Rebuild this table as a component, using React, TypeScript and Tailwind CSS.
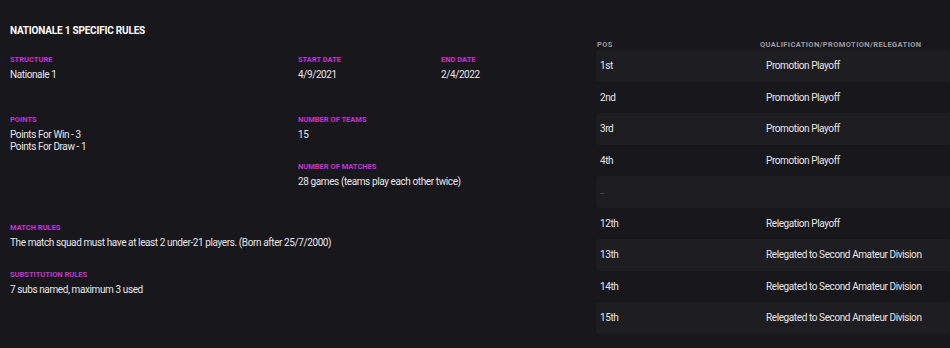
import React from 'react';

const rows = [
  { pos: '1st', rule: 'Promotion Playoff' },
  { pos: '2nd', rule: 'Promotion Playoff' },
  { pos: '3rd', rule: 'Promotion Playoff' },
  { pos: '4th', rule: 'Promotion Playoff' },
  { pos: '...', rule: '' },
  { pos: '12th', rule: 'Relegation Playoff' },
  { pos: '13th', rule: 'Relegated to Second Amateur Division' },
  { pos: '14th', rule: 'Relegated to Second Amateur Division' },
  { pos: '15th', rule: 'Relegated to Second Amateur Division' },
];

const Field: React.FC<{ label: string; lines: string[]; className?: string }> = ({ label, lines, className = '' }) => (
  <div className={className}>
    <div className="text-[7.5px] leading-[8px] font-bold uppercase text-[#c932d2]">{label}</div>
    <div className="mt-[5px] text-[10px] leading-[12px] tracking-[-0.4px] text-[#e6e6ea]">
      {lines.map((l) => (
        <div key={l}>{l}</div>
      ))}
    </div>
  </div>
);

export default function App() {
  return (
    <div className="w-[950px] h-[348px] bg-[#18171b] flex overflow-hidden" style={{ fontFamily: 'Roboto, "Liberation Sans", sans-serif' }}>
      {/* Rules */}
      <div className="w-[596px] pl-[10px] pt-[26px]">
        <h1 className="text-[10px] leading-[10px] font-bold uppercase tracking-[-0.2px] text-white">Nationale 1 Specific Rules</h1>

        <div className="mt-[20px] flex">
          <Field label="Structure" lines={['Nationale 1']} className="w-[288px]" />
          <Field label="Start Date" lines={['4/9/2021']} className="w-[143px]" />
          <Field label="End Date" lines={['2/4/2022']} />
        </div>

        <div className="mt-[35px] flex">
          <Field label="Points" lines={['Points For Win - 3', 'Points For Draw - 1']} className="w-[288px]" />
          <div className="flex flex-col gap-[22px]">
            <Field label="Number of Teams" lines={['15']} />
            <Field label="Number of Matches" lines={['28 games (teams play each other twice)']} />
          </div>
        </div>

        <div className="mt-[36px] flex flex-col gap-[22px]">
          <Field label="Match Rules" lines={['The match squad must have at least 2 under-21 players. (Born after 25/7/2000)']} />
          <Field label="Substitution Rules" lines={['7 subs named, maximum 3 used']} />
        </div>
      </div>

      {/* Positions */}
      <div className="flex-1 pt-[40px]">
        <div className="flex h-[10px] items-center text-[7.5px] font-bold uppercase tracking-[0.4px] text-[#9b9ba1]">
          <div className="w-[164px] pl-[1px]">Pos</div>
          <div>Qualification/Promotion/Relegation</div>
        </div>
        <div className="flex flex-col">
          {rows.map((r, i) => (
            <div
              key={r.pos}
              className={`flex h-[31.5px] items-center rounded-l-[4px] text-[10px] tracking-[-0.4px] text-[#e6e6ea] ${i % 2 === 0 ? 'bg-[#1e1d21]' : ''}`}
            >
              <div className={`w-[170px] pl-[4px] ${r.pos === '...' ? 'text-[#7d7d83] text-[7px]' : ''}`}>{r.pos}</div>
              <div>{r.rule}</div>
            </div>
          ))}
        </div>
      </div>
    </div>
  );
}
